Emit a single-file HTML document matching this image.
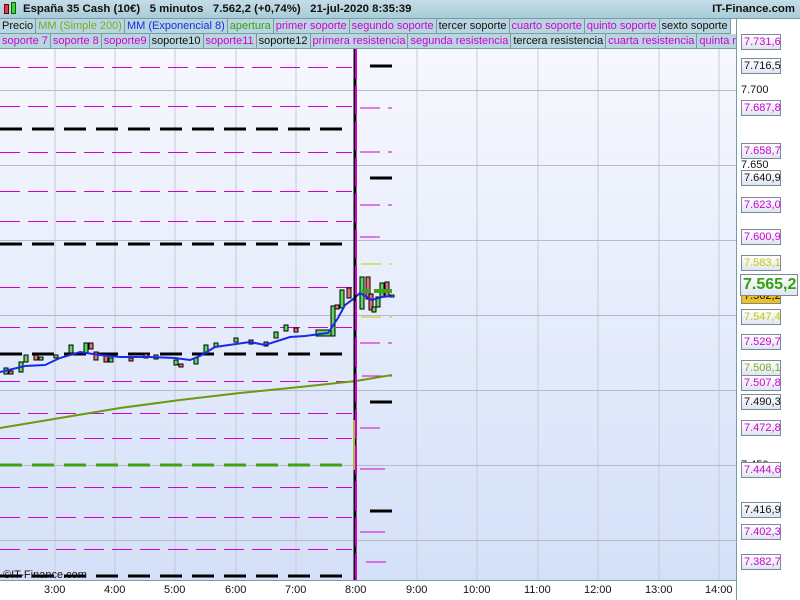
<!DOCTYPE html>
<html><head><meta charset="utf-8"><style>
*{margin:0;padding:0;box-sizing:border-box}
body{width:800px;height:600px;overflow:hidden;background:#fff;font-family:"Liberation Sans",sans-serif;position:relative}
.hdr{position:absolute;left:0;top:0;width:800px;height:19px;background:linear-gradient(#c4dde6,#a9ccd9);border-bottom:1px solid #7a9aa8;font-size:11.4px;font-weight:bold;line-height:19px;color:#111}
.leg{position:absolute;left:0;height:15px;font-size:11px;line-height:14px;white-space:nowrap;background:#b8d6df}
.leg span{display:inline-block;padding:0 2px;border-right:1px solid #7a9aa8;border-bottom:1px solid #7a9aa8}
.m{color:#d000d0}.k{color:#111}
.axis{position:absolute;left:736px;top:19px;width:64px;height:581px;background:#fff;border-left:1px solid #7a9aa8}
.lb{position:absolute;left:741px;width:40px;height:16px;font-size:11px;line-height:15px;padding-left:2px;border:1px solid #7a8a98;background:linear-gradient(#fff,#dfe6f2)}
.pl{position:absolute;left:741px;font-size:11px;color:#111}
.t{position:absolute;top:584px;font-size:11px;color:#111}
</style></head><body>
<svg style="position:absolute;left:0;top:0" width="736" height="600">
<defs><linearGradient id="g" x1="0" y1="0" x2="0" y2="1"><stop offset="0" stop-color="#f7f8fe"/><stop offset="1" stop-color="#d4e0f8"/></linearGradient></defs>
<rect x="0" y="49" width="736" height="531" fill="url(#g)"/>
<g stroke="#c3cbd8" stroke-width="1">
<line x1="55" y1="49" x2="55" y2="580"/><line x1="115" y1="49" x2="115" y2="580"/><line x1="175" y1="49" x2="175" y2="580"/><line x1="236" y1="49" x2="236" y2="580"/><line x1="296" y1="49" x2="296" y2="580"/><line x1="356" y1="49" x2="356" y2="580"/><line x1="417" y1="49" x2="417" y2="580"/><line x1="477" y1="49" x2="477" y2="580"/><line x1="538" y1="49" x2="538" y2="580"/><line x1="598" y1="49" x2="598" y2="580"/><line x1="659" y1="49" x2="659" y2="580"/><line x1="719" y1="49" x2="719" y2="580"/>
</g>
<g stroke="#b4bccb"><line x1="0" y1="90.5" x2="736" y2="90.5"/><line x1="0" y1="165.5" x2="736" y2="165.5"/><line x1="0" y1="240.5" x2="736" y2="240.5"/><line x1="0" y1="315.5" x2="736" y2="315.5"/><line x1="0" y1="390.5" x2="736" y2="390.5"/><line x1="0" y1="465.5" x2="736" y2="465.5"/><line x1="0" y1="540.5" x2="736" y2="540.5"/></g>
<line x1="0" y1="580.5" x2="736" y2="580.5" stroke="#7a9aa8"/>
<g stroke="#d000d0" stroke-width="1" stroke-dasharray="20,8">
<line x1="0" y1="67.5" x2="352" y2="67.5"/><line x1="0" y1="106.5" x2="352" y2="106.5"/><line x1="0" y1="152.5" x2="352" y2="152.5"/><line x1="0" y1="191.5" x2="352" y2="191.5"/><line x1="0" y1="221.5" x2="352" y2="221.5"/><line x1="0" y1="287.5" x2="352" y2="287.5"/><line x1="0" y1="327.5" x2="352" y2="327.5"/><line x1="0" y1="381.5" x2="352" y2="381.5"/><line x1="0" y1="413.5" x2="352" y2="413.5"/><line x1="0" y1="438.5" x2="352" y2="438.5"/><line x1="0" y1="487.5" x2="352" y2="487.5"/><line x1="0" y1="517.5" x2="352" y2="517.5"/><line x1="0" y1="549.5" x2="352" y2="549.5"/>
</g>
<g stroke="#000" stroke-width="3" stroke-dasharray="22,10">
<line x1="0" y1="129" x2="352" y2="129"/><line x1="0" y1="244" x2="352" y2="244"/><line x1="0" y1="354" x2="352" y2="354"/><line x1="0" y1="576" x2="352" y2="576"/>
</g>
<line x1="0" y1="465" x2="352" y2="465" stroke="#44a010" stroke-width="3" stroke-dasharray="22,10"/>
<g stroke="#000" stroke-width="3">
<line x1="370" y1="66" x2="392" y2="66"/><line x1="370" y1="178" x2="392" y2="178"/><line x1="370" y1="402" x2="392" y2="402"/><line x1="370" y1="511" x2="392" y2="511"/>
</g>
<g stroke="#d000d0" stroke-width="1">
<line x1="360" y1="108" x2="380" y2="108"/><line x1="388" y1="108" x2="392" y2="108"/>
<line x1="360" y1="152" x2="380" y2="152"/><line x1="388" y1="152" x2="392" y2="152"/>
<line x1="360" y1="205" x2="380" y2="205"/><line x1="388" y1="205" x2="392" y2="205"/>
<line x1="360" y1="237" x2="380" y2="237"/><line x1="360" y1="343" x2="380" y2="343"/><line x1="388" y1="343" x2="392" y2="343"/>
<line x1="362" y1="376" x2="392" y2="376"/><line x1="360" y1="428" x2="380" y2="428"/><line x1="360" y1="469" x2="385" y2="469"/><line x1="360" y1="532" x2="385" y2="532"/><line x1="366" y1="562" x2="386" y2="562"/>
</g>
<g stroke="#c8c800"><line x1="361" y1="264" x2="381" y2="264"/><line x1="389" y1="264" x2="392" y2="264"/><line x1="361" y1="317" x2="381" y2="317"/><line x1="389" y1="317" x2="392" y2="317"/></g>
<polyline fill="none" stroke="#6a9a10" stroke-width="2" points="0,428 60,418 120,408 180,400 240,393 300,387 356,381 392,375"/>
<g stroke="#000" stroke-width="1">
<rect x="4" y="368" width="4" height="6" fill="#5cd85c"/><rect x="9" y="371" width="4" height="3" fill="#e87070"/><rect x="19" y="362" width="4" height="10" fill="#5cd85c"/><rect x="24" y="355" width="4" height="7" fill="#5cd85c"/><rect x="34" y="355" width="4" height="5" fill="#e87070"/><rect x="39" y="357" width="4" height="3" fill="#5cd85c"/><rect x="54" y="355" width="4" height="3" fill="#5cd85c"/><rect x="69" y="345" width="4" height="8" fill="#5cd85c"/><rect x="84" y="343" width="4" height="10" fill="#5cd85c"/><rect x="89" y="343" width="4" height="6" fill="#e87070"/><rect x="94" y="352" width="4" height="8" fill="#e87070"/><rect x="104" y="356" width="4" height="6" fill="#e87070"/><rect x="109" y="358" width="4" height="4" fill="#5cd85c"/><rect x="129" y="358" width="4" height="3" fill="#e87070"/><rect x="144" y="354" width="4" height="4" fill="#e87070"/><rect x="154" y="355" width="4" height="4" fill="#5cd85c"/><rect x="174" y="360" width="4" height="5" fill="#5cd85c"/><rect x="179" y="364" width="4" height="3" fill="#e87070"/><rect x="194" y="358" width="4" height="6" fill="#5cd85c"/><rect x="204" y="345" width="4" height="9" fill="#5cd85c"/><rect x="214" y="343" width="4" height="4" fill="#5cd85c"/><rect x="234" y="338" width="4" height="4" fill="#5cd85c"/><rect x="249" y="340" width="4" height="4" fill="#e87070"/><rect x="264" y="342" width="4" height="4" fill="#e87070"/><rect x="274" y="332" width="4" height="6" fill="#5cd85c"/><rect x="284" y="325" width="4" height="6" fill="#5cd85c"/><rect x="294" y="328" width="4" height="4" fill="#e87070"/><rect x="316" y="330" width="18" height="6" fill="#5cd85c"/><rect x="331" y="306" width="4" height="30" fill="#5cd85c"/><rect x="335" y="305" width="4" height="4" fill="#e87070"/><rect x="340" y="290" width="4" height="18" fill="#5cd85c"/><rect x="347" y="288" width="4" height="10" fill="#e87070"/><rect x="360" y="277" width="4" height="32" fill="#5cd85c"/><rect x="366" y="277" width="4" height="22" fill="#e87070"/><rect x="369" y="294" width="4" height="16" fill="#e87070"/><rect x="372" y="307" width="4" height="5" fill="#5cd85c"/><rect x="376" y="297" width="4" height="10" fill="#5cd85c"/><rect x="380" y="283" width="4" height="14" fill="#5cd85c"/><rect x="385" y="282" width="4" height="14" fill="#e87070"/><rect x="390" y="295" width="4" height="2" fill="#5cd85c"/>
</g>
<polyline fill="none" stroke="#1a2ae8" stroke-width="2" points="0,372 25,366 45,365 60,358 80,352 100,355 120,357 150,357 175,358 190,360 200,356 215,347 250,342 265,345 290,337 305,336 328,333 338,318 345,305 352,300 360,293 372,300 382,297 392,296"/>
<g stroke="#40a020" stroke-width="4"><line x1="362" y1="291" x2="370" y2="291"/><line x1="374" y1="291" x2="392" y2="291"/></g>
<line x1="355" y1="49" x2="355" y2="580" stroke="#000" stroke-width="3"/>
<line x1="356" y1="49" x2="356" y2="580" stroke="#d000d0" stroke-width="2" stroke-dasharray="30,6"/>
<line x1="354" y1="420" x2="354" y2="470" stroke="#a8c030" stroke-width="2"/>
<text x="3" y="578" font-size="11" font-family="Liberation Sans" fill="#111">©IT-Finance.com</text>
</svg>
<div class="hdr"><span style="position:absolute;left:4px;top:4px;width:5px;height:10px;background:#e04040;border:1px solid #600"></span><span style="position:absolute;left:11px;top:2px;width:5px;height:12px;background:#40d040;border:1px solid #060"></span><span style="position:absolute;left:23px">España 35 Cash (10€) &nbsp; 5 minutos &nbsp; 7.562,2 (+0,74%) &nbsp; 21-jul-2020 8:35:39</span><span style="position:absolute;right:5px">IT-Finance.com</span></div>
<div class="axis"></div>
<div class="leg" style="top:19px"><span class="k">Precio</span><span style="color:#80a820">MM (Simple 200)</span><span style="color:#1a2ae8">MM (Exponencial 8)</span><span style="color:#38a010">apertura</span><span class="m">primer soporte</span><span class="m">segundo soporte</span><span class="k">tercer soporte</span><span class="m">cuarto soporte</span><span class="m">quinto soporte</span><span class="k">sexto soporte</span></div>
<div class="leg" style="top:34px;width:736px;overflow:hidden"><span class="m">soporte 7</span><span class="m">soporte 8</span><span class="m">soporte9</span><span class="k">soporte10</span><span class="m">soporte11</span><span class="k">soporte12</span><span class="m">primera resistencia</span><span class="m">segunda resistencia</span><span class="k">tercera resistencia</span><span class="m">cuarta resistencia</span><span class="m">quinta resistencia</span></div>
<div class="pl" style="top:84px">7.700</div><div class="pl" style="top:159px">7.650</div><div class="pl" style="top:459px">7.450</div>
<div class="lb m" style="top:34px">7.731,6</div>
<div class="lb k" style="top:58px">7.716,5</div>
<div class="lb m" style="top:100px">7.687,8</div>
<div class="lb m" style="top:143px">7.658,7</div>
<div class="lb k" style="top:170px">7.640,9</div>
<div class="lb m" style="top:197px">7.623,0</div>
<div class="lb m" style="top:229px">7.600,9</div>
<div class="lb" style="top:255px;color:#c8c800">7.583,1</div>
<div class="lb" style="top:288px;background:#f0c020;color:#111">7.562,2</div>
<div class="lb" style="top:309px;color:#c8c800">7.547,4</div>
<div class="lb m" style="top:334px">7.529,7</div>
<div class="lb" style="top:360px;color:#80a820">7.508,1</div>
<div class="lb m" style="top:375px">7.507,8</div>
<div class="lb k" style="top:394px">7.490,3</div>
<div class="lb m" style="top:420px">7.472,8</div>
<div class="lb m" style="top:462px">7.444,6</div>
<div class="lb k" style="top:502px">7.416,9</div>
<div class="lb m" style="top:524px">7.402,3</div>
<div class="lb m" style="top:554px">7.382,7</div>
<div class="lb" style="top:274px;left:740px;width:58px;height:22px;font-size:16px;font-weight:bold;line-height:20px;color:#38a010">7.565,2</div>
<div class="t" style="left:44px">3:00</div><div class="t" style="left:104px">4:00</div><div class="t" style="left:164px">5:00</div><div class="t" style="left:225px">6:00</div><div class="t" style="left:285px">7:00</div><div class="t" style="left:345px">8:00</div><div class="t" style="left:406px">9:00</div><div class="t" style="left:463px">10:00</div><div class="t" style="left:524px">11:00</div><div class="t" style="left:584px">12:00</div><div class="t" style="left:645px">13:00</div><div class="t" style="left:705px">14:00</div>
</body></html>
